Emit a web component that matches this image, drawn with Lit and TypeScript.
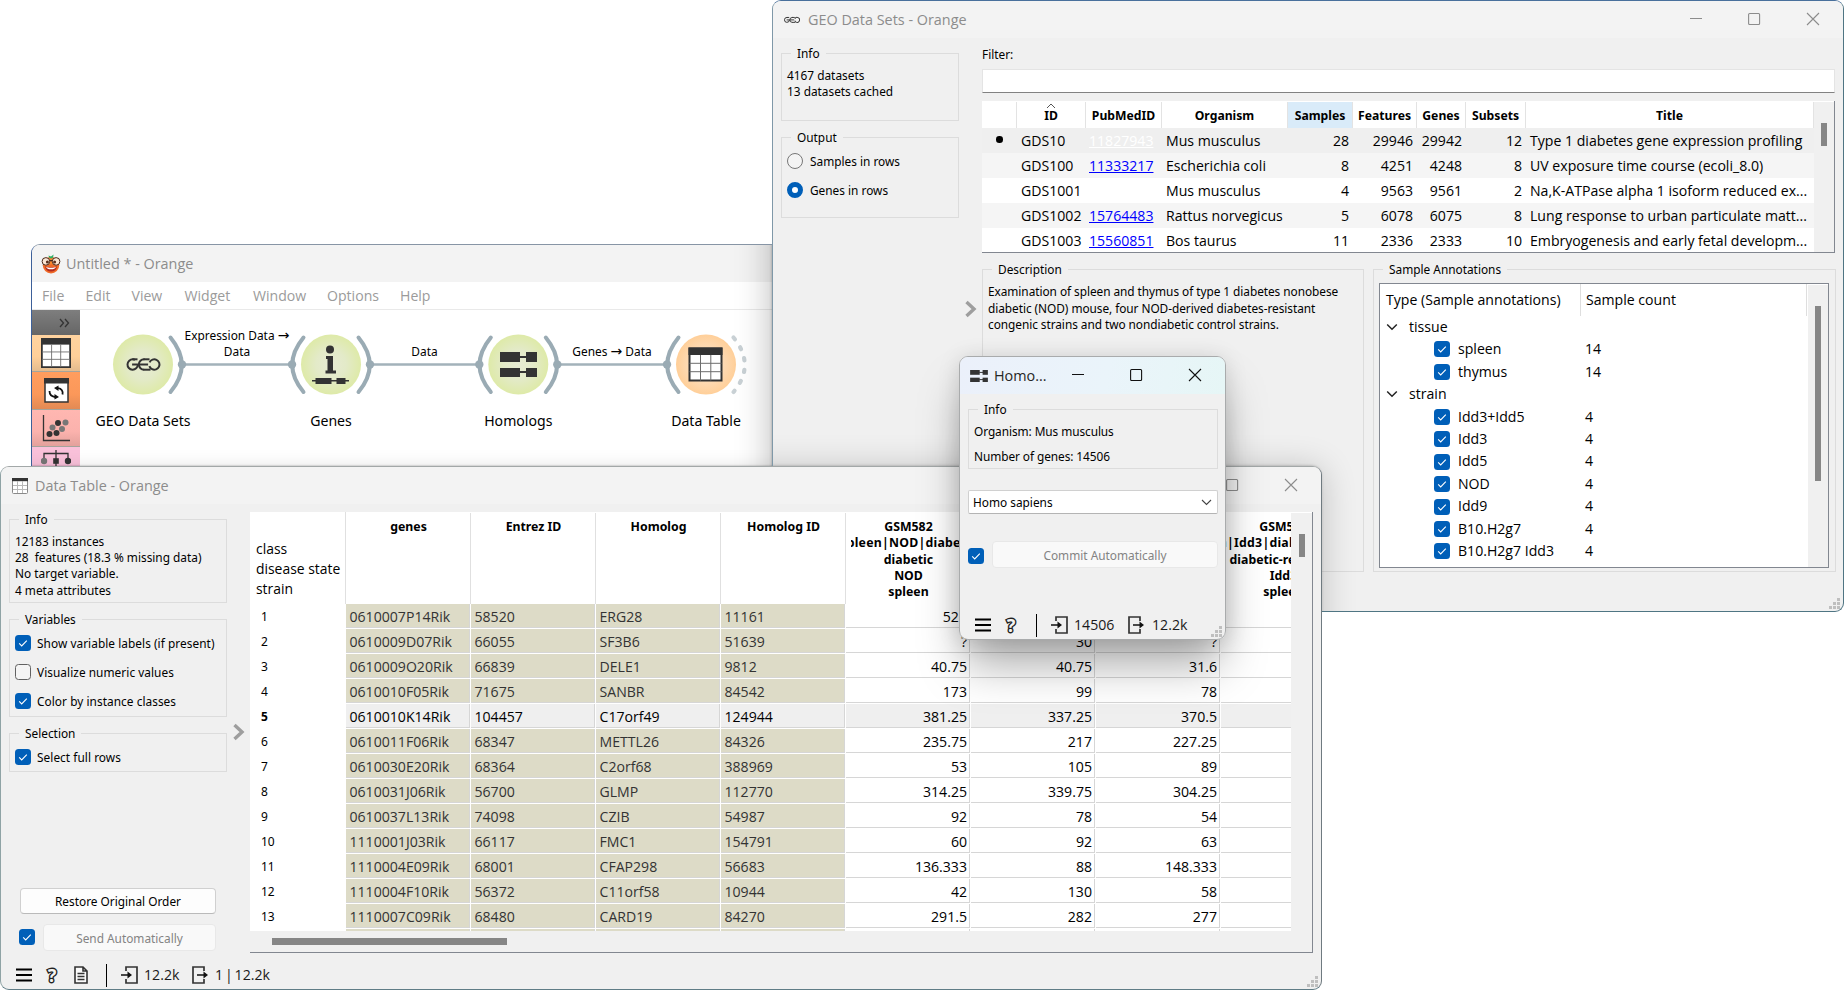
import { LitElement, html, svg, css, nothing } from 'lit';
import { customElement } from 'lit/decorators.js';
import { classMap } from 'lit/directives/class-map.js';

interface DataSet { id: string; pub: string; organism: string; samples: number; features: number; genes: number; subsets: number; title: string }

const DATASETS: DataSet[] = [
  { id: 'GDS10', pub: '11827943', organism: 'Mus musculus', samples: 28, features: 29946, genes: 29942, subsets: 12, title: 'Type 1 diabetes gene expression profiling' },
  { id: 'GDS100', pub: '11333217', organism: 'Escherichia coli', samples: 8, features: 4251, genes: 4248, subsets: 8, title: 'UV exposure time course (ecoli_8.0)' },
  { id: 'GDS1001', pub: '', organism: 'Mus musculus', samples: 4, features: 9563, genes: 9561, subsets: 2, title: 'Na,K-ATPase alpha 1 isoform reduced ex...' },
  { id: 'GDS1002', pub: '15764483', organism: 'Rattus norvegicus', samples: 5, features: 6078, genes: 6075, subsets: 8, title: 'Lung response to urban particulate matt...' },
  { id: 'GDS1003', pub: '15560851', organism: 'Bos taurus', samples: 11, features: 2336, genes: 2333, subsets: 10, title: 'Embryogenesis and early fetal developm...' },
];

const ANNOTATIONS: { name: string; count?: number }[] = [
  { name: 'tissue' }, { name: 'spleen', count: 14 }, { name: 'thymus', count: 14 },
  { name: 'strain' }, { name: 'Idd3+Idd5', count: 4 }, { name: 'Idd3', count: 4 }, { name: 'Idd5', count: 4 },
  { name: 'NOD', count: 4 }, { name: 'Idd9', count: 4 }, { name: 'B10.H2g7', count: 4 }, { name: 'B10.H2g7 Idd3', count: 4 },
];

const ROWS: string[][] = [
  ['0610007P14Rik', '58520', 'ERG28', '11161', '529', '', ''],
  ['0610009D07Rik', '66055', 'SF3B6', '51639', '?', '30', '?'],
  ['0610009O20Rik', '66839', 'DELE1', '9812', '40.75', '40.75', '31.6'],
  ['0610010F05Rik', '71675', 'SANBR', '84542', '173', '99', '78'],
  ['0610010K14Rik', '104457', 'C17orf49', '124944', '381.25', '337.25', '370.5'],
  ['0610011F06Rik', '68347', 'METTL26', '84326', '235.75', '217', '227.25'],
  ['0610030E20Rik', '68364', 'C2orf68', '388969', '53', '105', '89'],
  ['0610031J06Rik', '56700', 'GLMP', '112770', '314.25', '339.75', '304.25'],
  ['0610037L13Rik', '74098', 'CZIB', '54987', '92', '78', '54'],
  ['1110001J03Rik', '66117', 'FMC1', '154791', '60', '92', '63'],
  ['1110004E09Rik', '68001', 'CFAP298', '56683', '136.333', '88', '148.333'],
  ['1110004F10Rik', '56372', 'C11orf58', '10944', '42', '130', '58'],
  ['1110007C09Rik', '68480', 'CARD19', '84270', '291.5', '282', '277'],
  ['', '', '', '', '', '', ''],
];

const HEADERS: string[][] = [
  ['genes'], ['Entrez ID'], ['Homolog'], ['Homolog ID'],
  ['GSM582', 'spleen|NOD|diabetic', 'diabetic', 'NOD', 'spleen'],
  [], [],
  ['GSM589', 'spleen|Idd3|diabetic-resistant', 'diabetic-resistant', 'Idd3', 'spleen'],
];

/* ---------- icons ---------- */

const geoMark = svg`<g fill="none" stroke="#333" stroke-width="2">
  <circle cx="6.2" cy="6.3" r="5.2" stroke-dasharray="26 6.7" transform="rotate(3 6.2 6.3)"/>
  <line x1="5.6" y1="6.3" x2="12.4" y2="6.3"/>
  <line x1="6" y1="1.1" x2="11" y2="1.1"/>
  <circle cx="17.6" cy="6.3" r="5.2" stroke-dasharray="16.4 16.3" transform="rotate(90 17.6 6.3)"/>
  <line x1="17" y1="1.1" x2="23" y2="1.1"/><line x1="12.6" y1="6.3" x2="21.6" y2="6.3"/><line x1="17" y1="11.5" x2="24" y2="11.5"/>
  <circle cx="27.8" cy="6.3" r="5.2" stroke-dasharray="28 4.7" transform="rotate(205 27.8 6.3)"/></g>`;
const geoIcon = html`<svg class="i" width="16" height="8" viewBox="0 0 34 13">${geoMark}</svg>`;

const homologMark = svg`<g fill="#333"><rect x="0" y="0" width="20" height="10"/><rect x="26" y="0" width="11" height="10"/><rect x="19" y="4" width="8" height="2"/>
  <rect x="0" y="16" width="20" height="9"/><rect x="26" y="16" width="11" height="9"/><rect x="19" y="19" width="8" height="2"/></g>`;

const gridMark = svg`<rect x="1" y="1" width="32" height="32" fill="#fff" stroke="#333" stroke-width="2"/><rect x="0" y="0" width="34" height="7.5" fill="#333"/>
  <path d="M12 7.5V33M22.3 7.5V33M1 15.8H33M1 24.2H33" stroke="#6d6d6d" stroke-width="1" fill="none"/>`;

const tableIcon = html`<svg class="i" width="16" height="16" viewBox="0 0 16 16"><rect x=".5" y=".5" width="15" height="15" rx="1" fill="#fff" stroke="#8a8a8a"/><rect width="16" height="3.2" fill="#333"/><path d="M5.5 3V15M10.5 3V15M1 7.5H15M1 11.5H15" stroke="#b9b9b9" fill="none"/></svg>`;

const orangeIcon = html`<svg class="i" width="20" height="20" viewBox="0 0 20 20">
  <circle cx="10" cy="11.2" r="8.200" fill="#f06a28"/><ellipse cx="10" cy="7" rx="6" ry="3.500" fill="#f5862f"/>
  <path d="M7.500 1.500 10 2.600l2.600-2.200-.6 3.400-2 .6-2-.9z" fill="#2fae66"/>
  <circle cx="4.900" cy="7.400" r="3.800" fill="#fbe6d4" stroke="#4a2a1c" stroke-width="1"/>
  <circle cx="15.100" cy="7.400" r="3.800" fill="#fbe6d4" stroke="#4a2a1c" stroke-width="1"/>
  <path d="M8.600 6.600h2.800" stroke="#4a2a1c" stroke-width="1.200"/><circle cx="6.400" cy="8" r="1.500" fill="#5a2f1c"/><circle cx="13.600" cy="8" r="1.500" fill="#5a2f1c"/>
  <path d="M4 12.300c2 1.300 10 1.300 12 0-.4 3.500-2.600 5.300-6 5.300s-5.600-1.800-6-5.300z" fill="#b02a20"/><path d="M5 13c2 1 8 1 10 0-.6 1.600-2.400 2.300-5 2.300S5.600 14.600 5 13z" fill="#fff"/></svg>`;

const check = html`<span class="cb on"><svg class="i" width="16" height="16" viewBox="0 0 16 16"><path d="M4.200 8.400 6.700 10.900 11.800 5.700" fill="none" stroke="#fff" stroke-width="1.100"/></svg></span>`;
const uncheck = html`<span class="cb"></span>`;
const splitArrow = html`<svg class="i" width="12" height="18" viewBox="0 0 12 18"><path d="M1.500 2 9 9l-7.500 7" fill="none" stroke="#9e9e9e" stroke-width="3.400"/></svg>`;
const caret = html`<svg class="i" width="12" height="8" viewBox="0 0 12 8"><path d="M1.200 1.500 6 6.200l4.800-4.700" fill="none" stroke="#222" stroke-width="1.500"/></svg>`;
const grip = html`<svg class="grip" width="11" height="11" viewBox="0 0 11 11" fill="#bfbfbf"><path d="M8 0h3v3H8zM4 4h3v3H4zM8 4h3v3H8zM0 8h3v3H0zM4 8h3v3H4zM8 8h3v3H8z"/></svg>`;
const burger = html`<svg class="i" width="16" height="14" viewBox="0 0 16 14"><path d="M0 1.500h16M0 7h16M0 12.500h16" stroke="#000" stroke-width="2"/></svg>`;
const inIcon = html`<svg class="i" width="17" height="18" viewBox="0 0 17 18"><path d="M5 5V1h11v16H5v-4" fill="none" stroke="#333" stroke-width="1.700"/><path d="M0 9h8" stroke="#111" stroke-width="1.600"/><path d="M6.500 5.600 11 9l-4.500 3.400z" fill="#111"/></svg>`;
const outIcon = html`<svg class="i" width="17" height="18" viewBox="0 0 17 18"><path d="M12 5V1H1v16h11v-4" fill="none" stroke="#333" stroke-width="1.700"/><path d="M5 9h8" stroke="#111" stroke-width="1.600"/><path d="M11.500 5.600 16 9l-4.500 3.400z" fill="#111"/></svg>`;
const report = html`<svg class="i" width="14" height="18" viewBox="0 0 14 18"><path d="M1 1h8l4 4v12H1zM9 1v4h4" fill="#fafafa" stroke="#333" stroke-width="1.600"/><path d="M3.500 7.500h7M3.500 10.500h7M3.500 13.500h7" stroke="#333" stroke-width="1.300"/></svg>`;

const controls = html`<svg class="ctl" width="130" height="14" viewBox="0 0 130 14" fill="none" stroke="currentColor" stroke-width="1.100">
  <path d="M0 6.500h12"/><rect x="58.600" y="1.500" width="11" height="11" rx="1"/><path d="M117 1l12 12M129 1 117 13"/></svg>`;

/* ---------- shared look ---------- */

const base = css`
  * { box-sizing: border-box; }
  :host { display: block; font: 11.85px/16px "Noto Sans", sans-serif; color: #000; white-space: nowrap; }
  .i { display: block; flex: none; }
  .win { width: 100%; height: 100%; display: flex; flex-direction: column; background: #f0f0f0; border: 1px solid #8a979c; border-radius: 9px; overflow: hidden; position: relative; }
  .bar { flex: none; height: 37px; display: flex; align-items: center; background: #f3f3f3; color: #8c8c8c; font: 14.400px/20px "Open Sans", sans-serif; gap: 8px; }
  .ctl { display: block; margin: -1px 0 0 auto; }
  fieldset { margin: 0; padding: 0; border: 1px solid #dcdcdc; min-width: 0; }
  legend { margin-left: 9px; padding: 0 6px; line-height: 16px; }
  .cb { flex: none; display: block; width: 16px; height: 16px; border: 1px solid #616161; border-radius: 3.500px; background: #f4f4f4; }
  .cb.on { border: 0; background: #005fb8; }
  .opt { display: flex; align-items: center; gap: 6px; height: 16px; }
  .btn { display: flex; align-items: center; justify-content: center; background: #fdfdfd; border: 1px solid #d0d0d0; border-bottom-color: #bababa; border-radius: 4px; }
  .btn.off { background: #f9f9f9; border-color: #e8e8e8; color: #838383; }
  .status { display: flex; align-items: center; font: 14.150px/20px "Open Sans", sans-serif; color: #1a1a1a; }
  .sep { width: 1px; height: 23px; background: #000; }
  .q { font: bold 18px/20px "Noto Sans", sans-serif; width: 12px; display: flex; justify-content: center; color: #f4f4f4; -webkit-text-stroke: 2.800px #222; paint-order: stroke fill; }
  .grip { position: absolute; right: 3px; bottom: 2px; }
  .shade { position: absolute; border-radius: 9px; pointer-events: none; }
`;

@customElement('canvas-window')
class CanvasWindow extends LitElement {
  static styles = [base, css`
    .win { border-color: #9a9c9e; border-top-color: #8795a5; border-left-color: #3d6099; background: #fff; border-radius: 9px 0 0 0; }
    .bar { height: 37px; padding-left: 9px; gap: 5px; }
    .menu { flex: none; height: 28px; display: flex; align-items: center; background: #fff; border-bottom: 1px solid #e9e9e9; font: 14.100px/20px "Open Sans", sans-serif; color: #9b9b9b; }
    .menu span { padding-left: 10px; }
    .m0 { width: 43.500px; } .m1 { width: 46px; } .m2 { width: 53px; } .m3 { width: 68.500px; } .m4 { width: 74px; } .m5 { width: 73px; }
    .row { flex: 1; display: flex; min-height: 0; }
    .tools { width: 48px; display: flex; flex-direction: column; }
    .tools div { height: 37.300px; display: flex; justify-content: center; align-items: center; border-bottom: 1.500px solid #a4a49c; flex: none; }
    .tools .t0 { height: 25px; justify-content: flex-end; padding-right: 10px; background: linear-gradient(#7e7e7e, #666); border-bottom: 0; }
    .t1 { background: linear-gradient(#ffd39f, #ffcf99 60%, #e3bb8e); }
    .t2 { background: linear-gradient(#ff9d5e, #fb985a 60%, #e28a54); }
    .t3 { background: linear-gradient(#ffb7b1, #fbb2ad 60%, #e3a19c); }
    .t4 { background: #fac1da; }
    .stage { display: block; flex: 1; }
    .stage text { text-anchor: middle; font-size: 14.100px; }
    .stage .lk { font-size: 11.900px; }
    .arrow { font-family: "DejaVu Sans", sans-serif; font-size: 14px; }
    .geo { left: 740px; top: -245px; width: 1071px; height: 611px; box-shadow: 0 8px 34px 2px rgba(0,0,0,.26), 0 0 3px rgba(0,0,0,.300); border-radius: 8px; }
    .dt { left: -33px; top: 221px; width: 1321px; height: 523px; box-shadow: 0 6px 22px rgba(0,0,0,.200), 0 0 2px rgba(0,0,0,.400); }
  `];
  render() {
    const arcR = (x: number) => svg`<path d="M${x + 27.500} 27.500Q${x + 50} 55 ${x + 27.500} 82" fill="none" stroke="#9aabb4" stroke-width="4" stroke-linecap="round"/><circle cx="${x + 39}" cy="54.500" r="4.200" fill="#9aabb4"/>`;
    const arcL = (x: number) => svg`<path d="M${x - 27.500} 27.500Q${x - 50} 55 ${x - 27.500} 82" fill="none" stroke="#9aabb4" stroke-width="4" stroke-linecap="round"/><circle cx="${x - 39}" cy="54.500" r="4.200" fill="#9aabb4"/>`;
    const names = ['GEO Data Sets', 'Genes', 'Homologs', 'Data Table'];
    const xs = [63, 251, 438.300, 626];
    return html`<div class="win">
      <div class="bar">${orangeIcon}<span>Untitled * - Orange</span></div>
      <div class="menu">${['File', 'Edit', 'View', 'Widget', 'Window', 'Options', 'Help'].map((m, i) => html`<span class="m${i}">${m}</span>`)}</div>
      <div class="row">
        <div class="tools">
          <div class="t0"><svg class="i" width="11" height="10" viewBox="0 0 11 10"><path d="M1 1l3.500 4L1 9M6 1l3.500 4L6 9" fill="none" stroke="#333" stroke-width="1.300"/></svg></div>
          <div class="t1"><svg class="i" width="30" height="30" viewBox="0 0 34 34">${gridMark}</svg></div>
          <div class="t2"><svg class="i" width="25" height="25" viewBox="0 0 25 25"><rect x="1" y="1" width="23" height="23" fill="#fff" stroke="#333" stroke-width="1.500"/><rect width="25" height="5.500" fill="#333"/><path d="M18.500 16.500c.800-3.300-1-5.800-4.500-6.300M5.500 13c0 3 2 5.500 5.500 6" fill="none" stroke="#111" stroke-width="1.800"/><path d="M14.500 7.500v5.500l-4.500-3zM10.500 16v5.500l4.500-2.500z" fill="#111"/></svg></div>
          <div class="t3"><svg class="i" width="28" height="28" viewBox="0 0 28 28"><path d="M1.500 1v25.500H28" fill="none" stroke="#333" stroke-width="1.300"/><g fill="#333"><circle cx="7.500" cy="20" r="3"/><circle cx="14.500" cy="19" r="3"/><circle cx="16" cy="9" r="3"/></g><g fill="#777"><circle cx="10.500" cy="13.500" r="3"/><circle cx="20" cy="15" r="3"/><circle cx="23.500" cy="8.500" r="3"/></g></svg></div>
          <div class="t4"><svg class="i" width="30" height="30" viewBox="0 0 30 30"><path d="M15 0v28M3 10V3.500h24V10" fill="none" stroke="#333" stroke-width="1.300"/><circle cx="3" cy="11" r="3.200" fill="#777"/><rect x="12.200" y="8.200" width="5.600" height="5.600" fill="#333"/><circle cx="27" cy="11" r="3.200" fill="#333"/></svg></div>
        </div>
        <svg class="stage" width="692" height="157" viewBox="0 0 692 157">
          <defs>
            <radialGradient id="g"><stop offset="0" stop-color="#e7ebd3"/><stop offset=".5" stop-color="#e3eac8"/><stop offset="1" stop-color="#deeaa8"/></radialGradient>
            <radialGradient id="o"><stop offset="0" stop-color="#fbe7d2"/><stop offset=".5" stop-color="#fddcb8"/><stop offset="1" stop-color="#ffcf99"/></radialGradient>
          </defs>
          <path d="M102 54.500H212M290 54.500H399M477 54.500H587" stroke="#a3b2ba" stroke-width="2.600"/>
          ${xs.map((x, i) => svg`<circle cx="${x}" cy="54.500" r="30" fill="url(#${i === 3 ? 'o' : 'g'})"/>${i < 3 ? arcR(x) : nothing}${i > 0 ? arcL(x) : nothing}<text x="${x}" y="115.600">${names[i]}</text>`)}
          <path d="M653.500 27.500Q676 55 653.500 82" fill="none" stroke="#c9d1d5" stroke-width="4.200" stroke-linecap="round" stroke-dasharray="2.200 9.500"/>
          <g transform="translate(46.500 48.200)">${geoMark}</g>
          <g fill="#333"><circle cx="250" cy="39.500" r="4"/><rect x="246" y="46" width="7" height="3"/><rect x="247.500" y="46" width="5.500" height="16"/><rect x="245.500" y="60.500" width="10.500" height="3"/><rect x="232" y="70" width="37" height="1.500"/><rect x="235.500" y="68" width="16" height="6"/><rect x="256.500" y="68" width="9" height="6"/></g>
          <g transform="translate(420 42)">${homologMark}</g>
          <g transform="translate(608.500 37.500)">${gridMark}</g>
          <text class="lk" x="157" y="29.500">Expression Data <tspan class="arrow">→</tspan></text><text class="lk" x="157" y="45.800">Data</text>
          <text class="lk" x="344.500" y="45.800">Data</text><text class="lk" x="532" y="45.800">Genes <tspan class="arrow">→</tspan> Data</text>
        </svg>
      </div>
      <div class="shade geo"></div><div class="shade dt"></div>
    </div>`;
  }
}

@customElement('geo-window')
class GeoWindow extends LitElement {
  static styles = [base, css`
    .win { border-color: #4f7583; border-top-color: #49709c; border-left-color: #7f98a8; }
    .bar { padding: 0 23px 0 11px; }
    .bar .ctl { margin-top: -2px; }
    .body { flex: 1; display: grid; grid-template-columns: 178px 23px 1fr; padding: 8px 7px 0 8px; min-height: 0; }
    .left { display: flex; flex-direction: column; gap: 8px; margin-top: -1px; }
    .info { height: 76px; } .info div { padding: 6px 0 0 5px; }
    .out { height: 89px; } .radios { display: flex; flex-direction: column; gap: 13px; padding: 8px 0 0 5px; }
    .radio { display: flex; align-items: center; gap: 7px; }
    .dot { width: 16px; height: 16px; border: 1px solid #777; border-radius: 50%; background: #f4f4f4; }
    .dot.on { border: 5px solid #005fb8; background: #fff; }
    .split { padding: 254px 0 0 6px; }
    .right { display: flex; flex-direction: column; }
    .input { height: 24px; margin: 7px 1px 8px 0; background: #fff; border: 1px solid #e4e4e4; border-bottom: 1px solid #828282; }
    .grid { position: relative; height: 152px; margin-right: 1px; background: #fff; border: 0 solid #828790; border-width: 0 1px 1px 0; overflow: hidden; }
    .tr { display: grid; grid-template-columns: 35px 69px 76px 126px 65px 64px 49px 60px 288px; grid-template-rows: 25px; height: 25px; font: 14.100px/26px "Open Sans", sans-serif; width: 832px; }
    .tr > span { padding-left: 4px; } .tr > .n { padding: 0 4px 0 0; text-align: right; }
    .th { grid-template-rows: 27px; height: 27px; font: bold 12.200px/28px "Noto Sans", sans-serif; }
    .th > span { padding: 0; text-align: center; border-right: 1px solid #e3e3e3; margin-top: 1px; position: relative; height: 26px; overflow: hidden; }
    .th > .hl { background: #d9ebf9; }
    .up { position: absolute; left: 29px; top: 1px; }
    .tr.alt { background: #f5f5f5; } .tr.sel { background: #efefef; }
    .tr > .pub { color: #00f; text-decoration: underline; padding-left: 3px; } .tr.sel > .pub { color: #fff; }
    .bullet { width: 6.500px; height: 6.500px; border-radius: 50%; background: #000; margin: 8px 0 0 10px; }
    .sb { position: absolute; right: 0; top: 1px; bottom: 0; width: 20px; background: #f0f0f0; }
    .thumb { position: absolute; left: 7px; width: 6px; background: #868686; }
    .h1 { top: 21px; height: 23px; } .h2 { top: 21px; height: 175px; }
    .low { display: grid; grid-template-columns: 382px 463px; gap: 9px; height: 311px; margin-top: 8px; }
    .desc { padding: 6px 0 0 5px; line-height: 16.600px; letter-spacing: -.050px; }
    .tree { position: relative; margin: 6px 6px 0 5px; height: 285px; background: #fff; border: 1px solid #828790; font: 14.100px/22.450px "Open Sans", sans-serif; overflow: hidden; }
    .tree .hd { display: flex; height: 31.800px; line-height: 32px; }
    .hd .a { width: 201px; padding-left: 6px; border-right: 1px solid #dedede; } .hd .b { width: 226px; padding-left: 5px; border-right: 1px solid #dedede; }
    .node { display: flex; align-items: center; gap: 11px; height: 22.450px; padding-left: 6px; }
    .leaf { display: grid; grid-template-columns: 16px 119px 1fr; gap: 8px; align-items: center; height: 22.450px; padding-left: 54px; }
    .dt { left: -773px; top: 465px; width: 1321px; height: 523px; box-shadow: 0 4px 34px 2px rgba(0,0,0,.200), 0 0 3px rgba(0,0,0,.300); }
  `];
  render() {
    return html`<div class="win">
      <div class="bar">${geoIcon}<span>GEO Data Sets - Orange</span>${controls}</div>
      <div class="body">
        <div class="left">
          <fieldset class="info"><legend>Info</legend><div>4167 datasets<br>13 datasets cached</div></fieldset>
          <fieldset class="out"><legend>Output</legend><div class="radios">
            <label class="radio"><span class="dot"></span>Samples in rows</label>
            <label class="radio"><span class="dot on"></span>Genes in rows</label></div></fieldset>
        </div>
        <div class="split">${splitArrow}</div>
        <div class="right">
          <div>Filter:</div><div class="input"></div>
          <div class="grid">
            <div class="tr th"><span></span><span><svg class="up" width="10" height="6" viewBox="0 0 10 6"><path d="M1 5l4-4 4 4" fill="none" stroke="#555"/></svg>ID</span><span>PubMedID</span><span>Organism</span><span class="hl">Samples</span><span>Features</span><span>Genes</span><span>Subsets</span><span>Title</span></div>
            ${DATASETS.map((d, i) => html`<div class=${classMap({ tr: true, sel: i === 0, alt: i % 2 === 1 })}>
              <span>${i === 0 ? html`<div class="bullet"></div>` : nothing}</span><span>${d.id}</span><span class="pub">${d.pub}</span><span>${d.organism}</span>
              <span class="n">${d.samples}</span><span class="n">${d.features}</span><span class="n">${d.genes}</span><span class="n">${d.subsets}</span><span>${d.title}</span></div>`)}
            <div class="sb"><div class="thumb h1"></div></div>
          </div>
          <div class="low">
            <fieldset><legend>Description</legend><div class="desc">Examination of spleen and thymus of type 1 diabetes nonobese<br>diabetic (NOD) mouse, four NOD-derived diabetes-resistant<br>congenic strains and two nondiabetic control strains.</div></fieldset>
            <fieldset><legend>Sample Annotations</legend><div class="tree">
              <div class="hd"><span class="a">Type (Sample annotations)</span><span class="b">Sample count</span></div>
              ${ANNOTATIONS.map(a => a.count === undefined
                ? html`<div class="node">${caret}<span>${a.name}</span></div>`
                : html`<div class="leaf">${check}<span>${a.name}</span><span>${a.count}</span></div>`)}
              <div class="sb"><div class="thumb h2"></div></div>
            </div></fieldset>
          </div>
        </div>
      </div>${grip}<div class="shade dt"></div></div>`;
  }
}

@customElement('table-window')
class TableWindow extends LitElement {
  static styles = [base, css`
    .win { border-color: #8fa3a5; border-right-color: #6f7a80; border-bottom-color: #5f7c86; border-top-color: #a3a8a8; }
    .bar { padding: 0 23px 0 11px; gap: 7px; }
    .body { flex: 1; display: grid; grid-template-columns: 218px 23px 1063px; padding: 8px 0 0 8px; min-height: 0; }
    .left { display: flex; flex-direction: column; gap: 8px; margin-top: -1px; }
    .info { height: 92px; } .info div { padding: 6px 0 0 5px; line-height: 16.200px; }
    .vars { height: 106px; } .selc { height: 47px; }
    .opts { display: flex; flex-direction: column; gap: 13px; padding: 8px 0 0 5px; letter-spacing: .050px; }
    .restore { margin: 108px 11px 0 11px; height: 26px; }
    .send { display: flex; align-items: center; gap: 8px; margin: 2px 11px 0 10px; height: 27px; } .send .btn { flex: 1; height: 27px; } .send .cb { margin-top: -1px; }
    .split { padding: 211px 0 0 6px; }
    .grid { position: relative; height: 441px; background: #fff; border: 0 solid #828790; border-width: 0 1px 1px 0; display: flex; flex-direction: column; }
    .view { width: 1041px; height: 419px; overflow: hidden; }
    .hr, .r { display: grid; grid-template-columns: 96px repeat(8, 125px); }
    .hr { height: 92px; }
    .corner { border-right: 1px solid #e0e0e0; padding: 27px 0 0 6px; font: 13.900px/20px "Open Sans", sans-serif; }
    .h { border-right: 1px solid #e0e0e0; margin-top: 1px; padding: 6px 4px 0 5px; font: bold 12.300px/16.300px "Noto Sans", sans-serif; }
    .h > div { overflow: hidden; display: flex; justify-content: center; }
    .h > div:nth-child(2) { letter-spacing: .250px; }
    .r { grid-template-rows: 25px; height: 25px; font: 14.100px/25px "Open Sans", sans-serif; }
    .rh { padding-left: 11px; font: 12px/26px "Noto Sans", sans-serif; }
    .c { height: 25px; background: #fff; border: 0 solid #fff; border-width: 0 1px 1px 0; box-shadow: inset -1px -1px #d6d6d6; text-align: right; padding-right: 3px; }
    .c.meta { background: #dddbc7; text-align: left; padding-left: 3.500px; color: #333; }
    .sel .c, .sel .c.meta { background: #efefef; color: #000; } .sel .rh { font-weight: bold; }
    .vs { position: absolute; right: 0; top: 1px; bottom: 0; width: 21px; background: #f0f0f0; }
    .vt { position: absolute; left: 8px; top: 21px; width: 6px; height: 23px; background: #868686; }
    .hs { flex: 1; background: #f0f0f0; padding: 7px 0 0 22px; } .ht { width: 235px; height: 7px; background: #868686; }
    .status { flex: none; height: 26px; margin: 8px 0 1px 15px; }
    .q { margin: 0 16px 0 14px; } .sep { margin: 0 14px 0 18px; }
    .v1 { width: 48px; margin-left: 6px; } .v2 { margin-left: 6px; word-spacing: -1.800px; }
  `];
  render() {
    return html`<div class="win">
      <div class="bar">${tableIcon}<span>Data Table - Orange</span>${controls}</div>
      <div class="body">
        <div class="left">
          <fieldset class="info"><legend>Info</legend><div>12183 instances<br>28&nbsp; features (18.3 % missing data)<br>No target variable.<br>4 meta attributes</div></fieldset>
          <fieldset class="vars"><legend>Variables</legend><div class="opts">
            <div class="opt">${check}Show variable labels (if present)</div><div class="opt">${uncheck}Visualize numeric values</div><div class="opt">${check}Color by instance classes</div></div></fieldset>
          <fieldset class="selc"><legend>Selection</legend><div class="opts"><div class="opt">${check}Select full rows</div></div></fieldset>
          <div class="btn restore">Restore Original Order</div>
          <div class="send">${check}<div class="btn off">Send Automatically</div></div>
        </div>
        <div class="split">${splitArrow}</div>
        <div class="grid">
          <div class="view">
            <div class="hr"><div class="corner">class<br>disease state<br>strain</div>${HEADERS.map(h => html`<div class="h">${h.map(l => html`<div><span>${l}</span></div>`)}</div>`)}</div>
            ${ROWS.map((r, i) => html`<div class=${classMap({ r: true, sel: i === 4 })}><div class="rh">${i < 13 ? i + 1 : nothing}</div>${[...r, ''].map((v, k) => html`<div class=${classMap({ c: true, meta: k < 4 })}>${v}</div>`)}</div>`)}
          </div>
          <div class="hs"><div class="ht"></div></div>
          <div class="vs"><div class="vt"></div></div>
        </div>
      </div>
      <div class="status">${burger}<span class="q">?</span>${report}<span class="sep"></span>${inIcon}<span class="v1">12.2k</span>${outIcon}<span class="v2">1 | 12.2k</span></div>
      ${grip}</div>`;
  }
}

@customElement('homologs-window')
class HomologsWindow extends LitElement {
  static styles = [base, css`
    .win { border-color: #a9abac; }
    .frame { height: 100%; border-radius: 9px; box-shadow: 0 30px 46px -6px rgba(0,0,0,.340), 0 2px 22px rgba(0,0,0,.130); }
    .bar { padding: 0 23px 0 10px; background: linear-gradient(100deg, #ebf0fa, #eaf4fa 55%, #e6f6f6); color: #262626; gap: 6px; }
    .bar .ctl { color: #111; }
    .body { flex: 1; padding: 7px 7px 0 8px; }
    .info { height: 68px; } .lines { padding: 6px 0 0 5px; line-height: 16px; display: flex; flex-direction: column; gap: 9px; letter-spacing: -.070px; }
    .combo { display: flex; justify-content: space-between; align-items: center; height: 24px; margin-top: 21px; padding: 0 5px 0 4px; background: #fff; border: 1px solid #d0d0d0; border-bottom-color: #b4b4b4; border-radius: 2px; }
    .commit { display: flex; align-items: center; gap: 8px; margin-top: 27px; } .commit .btn { flex: 1; height: 27px; } .commit .cb { margin-top: 2px; }
    .status { flex: none; height: 26px; margin: 0 0 1px 15px; }
    .q { margin: 0 19px 0 14px; } .v1 { margin: 0 14px 0 6px; width: 40px; } .v2 { margin-left: 7px; } .in { margin-left: 14px; }
  `];
  render() {
    return html`<div class="frame"><div class="win">
      <div class="bar"><svg class="i" width="18" height="12" viewBox="0 0 37 25">${homologMark}</svg><span>Homo...</span>${controls}</div>
      <div class="body">
        <fieldset class="info"><legend>Info</legend><div class="lines"><span>Organism: Mus musculus</span><span>Number of genes: 14506</span></div></fieldset>
        <div class="combo">Homo sapiens<svg class="i" width="11" height="7" viewBox="0 0 11 7"><path d="M1 1l4.500 4.500L10 1" fill="none" stroke="#444" stroke-width="1.100"/></svg></div>
        <div class="commit">${check}<div class="btn off">Commit Automatically</div></div>
      </div>
      <div class="status">${burger}<span class="q">?</span><span class="sep"></span><span class="in">${inIcon}</span><span class="v1">14506</span>${outIcon}<span class="v2">12.2k</span></div>
      ${grip}</div></div>`;
  }
}

@customElement('app-root')
class AppRoot extends LitElement {
  static styles = css`
    :host { display: block; }
    .desk { position: relative; width: 1844px; height: 990px; background: #fff; overflow: hidden; }
    .desk > * { position: absolute; }
    .main { left: 31px; top: 244px; width: 742px; height: 232px; }
    .geo { left: 772px; top: 0; width: 1072px; height: 612px; }
    .table { left: 0; top: 466px; width: 1322px; height: 524px; }
    .homologs { left: 959px; top: 356px; width: 267px; height: 284px; }
  `;
  render() {
    return html`<div class="desk">
      <canvas-window class="main"></canvas-window>
      <geo-window class="geo"></geo-window>
      <table-window class="table"></table-window>
      <homologs-window class="homologs"></homologs-window>
    </div>`;
  }
}
